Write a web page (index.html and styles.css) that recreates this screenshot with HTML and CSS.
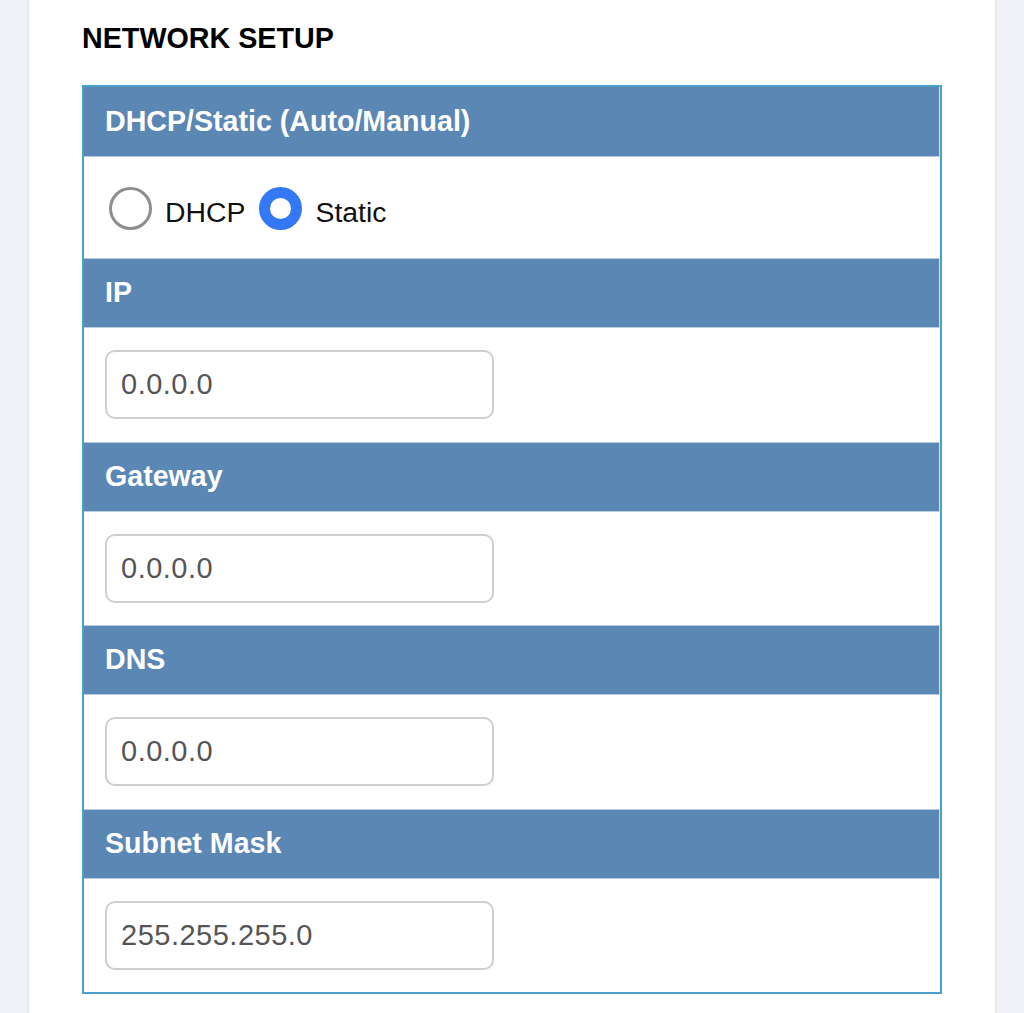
FILE: index.html
```html
<!DOCTYPE html>
<html lang="en">
<head>
    <meta charset="UTF-8">
    <meta name="viewport" content="width=device-width, initial-scale=1.0">
    <title>Network Setup</title>
    <link rel="stylesheet" href="styles.css">
</head>
<body>
    <div class="page">
        <h1>NETWORK SETUP</h1>

        <div class="setup">
            <div class="head">DHCP/Static (Auto/Manual)</div>
            <div class="row radios">
                <label><input type="radio" name="mode" value="dhcp"> <span>DHCP</span></label>
                <label><input type="radio" name="mode" value="static" checked> <span>Static</span></label>
            </div>

            <div class="head">IP</div>
            <div class="row">
                <input type="text" class="field" value="0.0.0.0">
            </div>

            <div class="head">Gateway</div>
            <div class="row">
                <input type="text" class="field" value="0.0.0.0">
            </div>

            <div class="head">DNS</div>
            <div class="row">
                <input type="text" class="field" value="0.0.0.0">
            </div>

            <div class="head">Subnet Mask</div>
            <div class="row">
                <input type="text" class="field" value="255.255.255.0">
            </div>
        </div>
    </div>
</body>
</html>
```

FILE: styles.css
```css
body {
    margin: 0;
    background-color: #f0f2f7;
    font-family: "Liberation Sans", Arial, Helvetica, sans-serif;
}
.page {
    margin-left: 27px;
    width: 970px;
    min-height: 1013px;
    box-sizing: border-box;
    padding: 22px 53px 0;
    background-color: #fff;
    border-left: 2px solid #e6e8ee;
    border-right: 2px solid #e6e8ee;
}
h1 {
    margin: 0 0 31px;
    font-size: 28.7px;
    line-height: 32px;
    font-weight: bold;
    color: #000;
}
.setup {
    border: 2px solid #4aa0c9;
}
.head {
    height: 70px;
    box-sizing: border-box;
    padding: 0 21px;
    line-height: 68px;
    background-color: #5b87b5;
    color: #fff;
    font-size: 28.6px;
    font-weight: bold;
    border-bottom: 1px solid #b9cade;
    border-right: 1px solid #d6e1ec;
}
.row + .head {
    border-top: 1px solid #b9cade;
    line-height: 67px;
}
.row {
    height: 113.5px;
    box-sizing: border-box;
    padding: 22px 21px 0;
}
.radios {
    height: 101px;
    display: flex;
    align-items: center;
    gap: 14px;
    padding-top: 2px;
    font-size: 28.4px;
    color: #111;
}
.radios label {
    display: flex;
    align-items: center;
    gap: 13px;
}
.radios label span {
    padding-top: 7px;
}
.radios label:first-child {
    margin-left: 4px;
}
input[type="radio"] {
    appearance: none;
    -webkit-appearance: none;
    margin: 0;
    width: 43px;
    height: 43px;
    border-radius: 50%;
    border: 3px solid #8e8e8e;
    box-sizing: border-box;
    background-color: #fff;
}
input[type="radio"]:checked {
    border: 11px solid #3478f6;
}
.field {
    width: 389px;
    height: 69px;
    box-sizing: border-box;
    padding: 0 14px;
    border: 2px solid #cfcfcf;
    border-radius: 10px;
    font-family: inherit;
    font-size: 29px;
    letter-spacing: 0.5px;
    color: #555;
    background-color: #fff;
}
```
